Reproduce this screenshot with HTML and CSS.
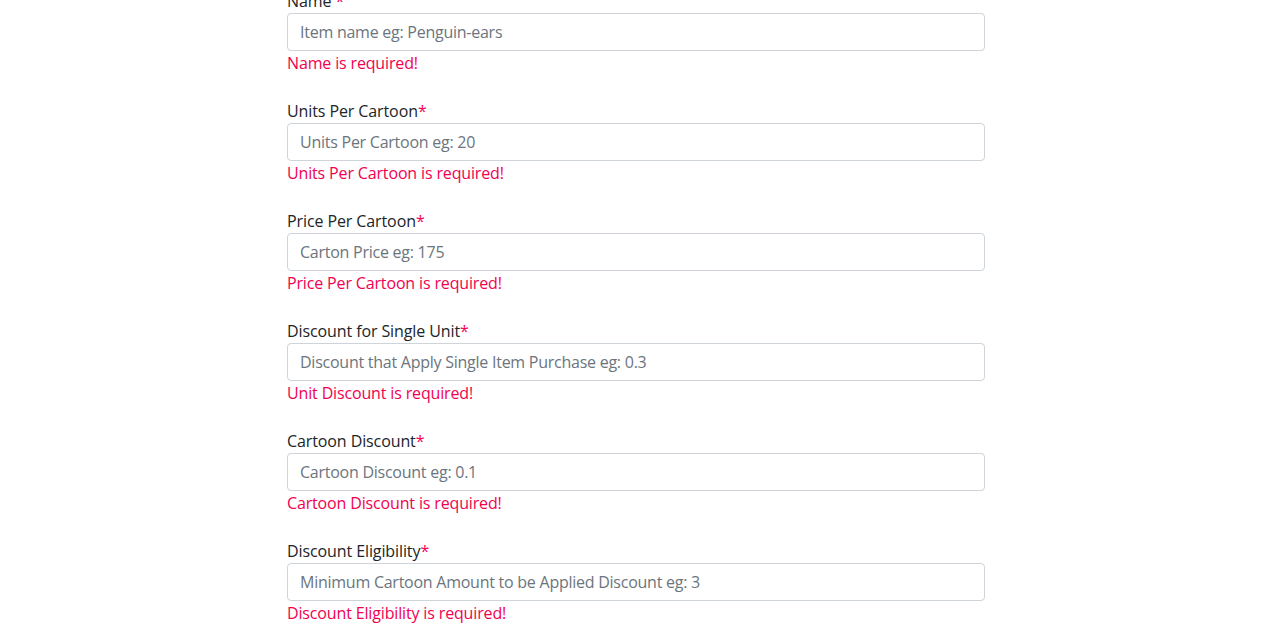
FILE: index.html
```html
<!DOCTYPE html>
<html lang="en">
<head>
<meta charset="utf-8">
<title>Add Item</title>
<link rel="stylesheet" href="styles.css">
</head>
<body>
<form class="item-form">
  <div class="field">
    <label class="field-label">Name <span class="req">*</span></label>
    <input class="field-input" type="text" placeholder="Item name eg: Penguin-ears">
    <div class="field-error">Name is required!</div>
  </div>
  <div class="field">
    <label class="field-label">Units Per Cartoon<span class="req">*</span></label>
    <input class="field-input" type="text" placeholder="Units Per Cartoon eg: 20">
    <div class="field-error">Units Per Cartoon is required!</div>
  </div>
  <div class="field">
    <label class="field-label">Price Per Cartoon<span class="req">*</span></label>
    <input class="field-input" type="text" placeholder="Carton Price eg: 175">
    <div class="field-error">Price Per Cartoon is required!</div>
  </div>
  <div class="field">
    <label class="field-label">Discount for Single Unit<span class="req">*</span></label>
    <input class="field-input" type="text" placeholder="Discount that Apply Single Item Purchase eg: 0.3">
    <div class="field-error">Unit Discount is required!</div>
  </div>
  <div class="field">
    <label class="field-label">Cartoon Discount<span class="req">*</span></label>
    <input class="field-input" type="text" placeholder="Cartoon Discount eg: 0.1">
    <div class="field-error">Cartoon Discount is required!</div>
  </div>
  <div class="field">
    <label class="field-label">Discount Eligibility<span class="req">*</span></label>
    <input class="field-input" type="text" placeholder="Minimum Cartoon Amount to be Applied Discount eg: 3">
    <div class="field-error">Discount Eligibility is required!</div>
  </div>
</form>
</body>
</html>
```
FILE: styles.css
```css
html, body {
  margin: 0;
  padding: 0;
  background: #ffffff;
  overflow: hidden;
}
body {
  font-family: "Open Sans", "Noto Sans", sans-serif;
  font-size: 16px;
  line-height: 24px;
  color: #212529;
}
.item-form {
  width: 698px;
  margin: -11px 0 0 287px;
  display: flex;
  flex-direction: column;
  gap: 24px;
}
.field {
  display: flex;
  flex-direction: column;
}
.field-label {
  display: block;
  height: 24px;
  letter-spacing: -0.1px;
}
.req {
  color: #f50057;
}
.field-input {
  box-sizing: border-box;
  height: 38px;
  width: 100%;
  padding: 6px 12px;
  border: 1px solid #ced4da;
  border-radius: 4px;
  font-family: inherit;
  font-size: 16px;
  line-height: 24px;
  letter-spacing: -0.25px;
  color: #495057;
  background: #fff;
  outline: none;
}
.field-input::placeholder {
  color: #6c757d;
  opacity: 1;
}
.field-error {
  color: #f20050;
  height: 24px;
  letter-spacing: -0.15px;
}
```
